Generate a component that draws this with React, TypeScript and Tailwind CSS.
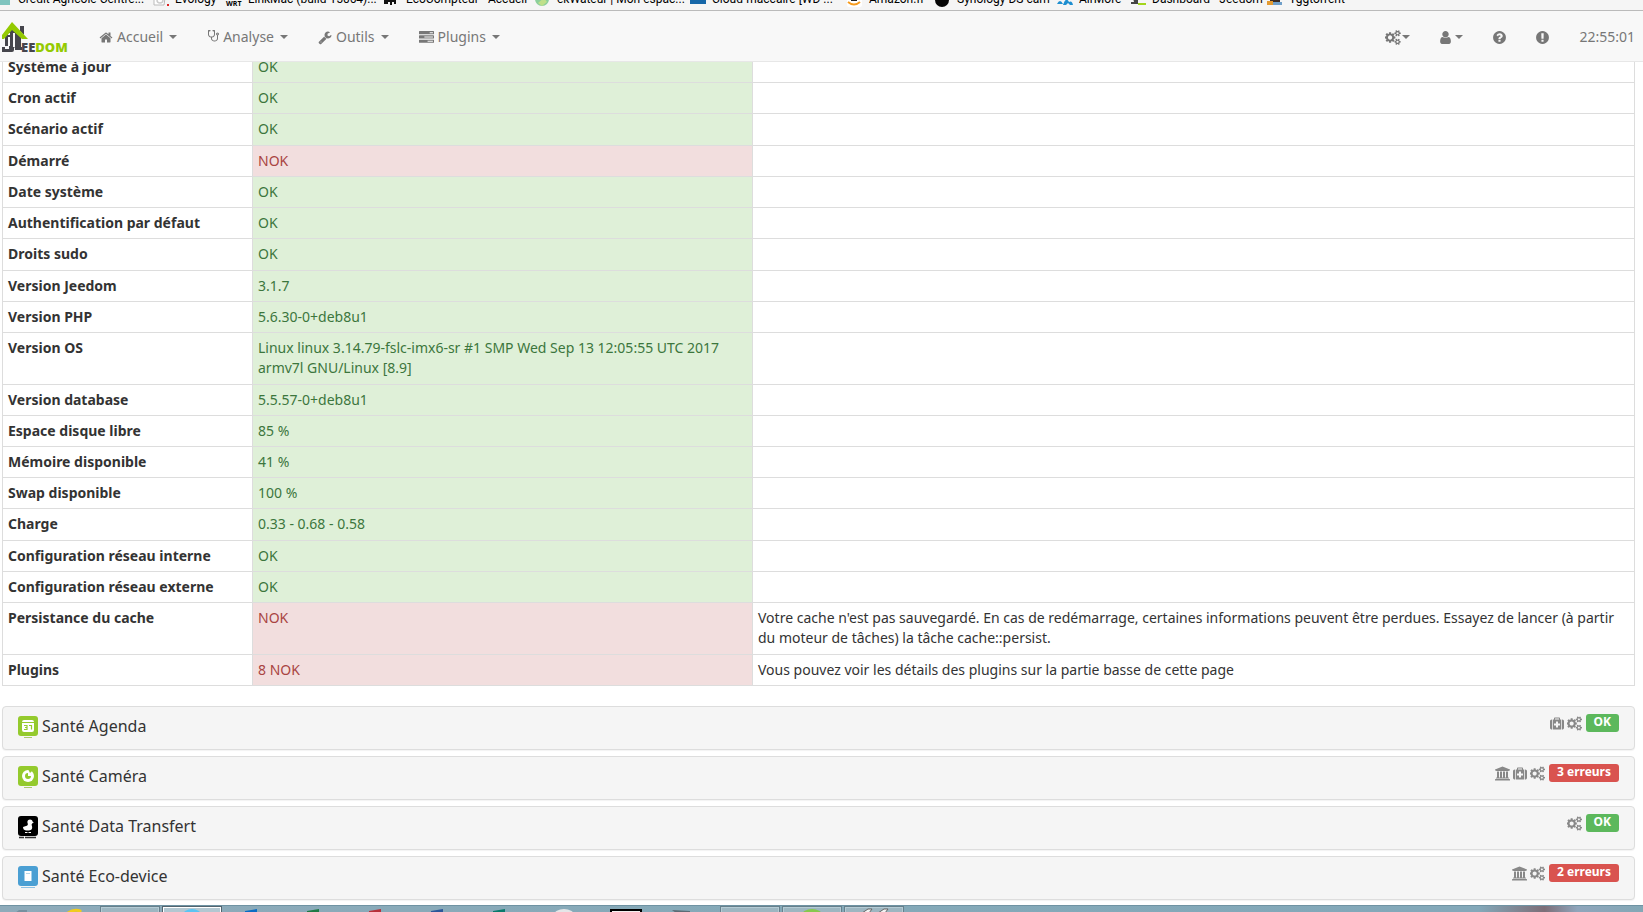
import type { ReactNode } from "react";
import clsx from "clsx";

type Status = "ok" | "nok";

type HealthRow = {
  name: string;
  value: string;
  status: Status;
  comment?: string;
};

const rows: HealthRow[] = [
  { name: "Système à jour", value: "OK", status: "ok" },
  { name: "Cron actif", value: "OK", status: "ok" },
  { name: "Scénario actif", value: "OK", status: "ok" },
  { name: "Démarré", value: "NOK", status: "nok" },
  { name: "Date système", value: "OK", status: "ok" },
  { name: "Authentification par défaut", value: "OK", status: "ok" },
  { name: "Droits sudo", value: "OK", status: "ok" },
  { name: "Version Jeedom", value: "3.1.7", status: "ok" },
  { name: "Version PHP", value: "5.6.30-0+deb8u1", status: "ok" },
  {
    name: "Version OS",
    value: "Linux linux 3.14.79-fslc-imx6-sr #1 SMP Wed Sep 13 12:05:55 UTC 2017 armv7l GNU/Linux [8.9]",
    status: "ok"
  },
  { name: "Version database", value: "5.5.57-0+deb8u1", status: "ok" },
  { name: "Espace disque libre", value: "85 %", status: "ok" },
  { name: "Mémoire disponible", value: "41 %", status: "ok" },
  { name: "Swap disponible", value: "100 %", status: "ok" },
  { name: "Charge", value: "0.33 - 0.68 - 0.58", status: "ok" },
  { name: "Configuration réseau interne", value: "OK", status: "ok" },
  { name: "Configuration réseau externe", value: "OK", status: "ok" },
  {
    name: "Persistance du cache",
    value: "NOK",
    status: "nok",
    comment:
      "Votre cache n'est pas sauvegardé. En cas de redémarrage, certaines informations peuvent être perdues. Essayez de lancer (à partir du moteur de tâches) la tâche cache::persist."
  },
  {
    name: "Plugins",
    value: "8 NOK",
    status: "nok",
    comment: "Vous pouvez voir les détails des plugins sur la partie basse de cette page"
  }
];

const glyphs = {
  home: {
    box: "0 0 1792 1792",
    d: "M1472 992v480q0 26-19 45t-45 19h-384v-384h-256v384h-384q-26 0-45-19t-19-45v-480q0-1 .5-3t.5-3l575-474 575 474q1 2 1 6zm223-69l-62 74q-8 9-21 11h-3q-13 0-21-7l-692-577-692 577q-12 8-24 7-13-2-21-11l-62-74q-8-10-7-23.5t11-21.5l719-599q32-26 76-26t76 26l244 204v-195q0-14 9-23t23-9h192q14 0 23 9t9 23v408l219 182q10 8 11 21.5t-7 23.5z"
  },
  stethoscope: {
    box: "0 0 1536 1792",
    d: "M1408 448q0 26-19 45t-45 19-45-19-19-45 19-45 45-19 45 19 19 45zm128 0q0 62-35.5 111t-92.5 70v395q0 159-131.5 271.5t-316.5 112.5-316.5-112.5-131.5-271.5v-132q-164-20-274-128t-110-252v-512q0-26 19-45t45-19q6 0 16 2 17-30 47-48t65-18q53 0 90.5 37.5t37.5 90.5-37.5 90.5-90.5 37.5q-33 0-64-18v402q0 106 94 181t226 75 226-75 94-181v-402q-31 18-64 18-53 0-90.5-37.5t-37.5-90.5 37.5-90.5 90.5-37.5q35 0 65 18t47 48q10-2 16-2 26 0 45 19t19 45v512q0 144-110 252t-274 128v132q0 106 94 181t226 75 226-75 94-181v-395q-57-21-92.5-70t-35.5-111q0-80 56-136t136-56 136 56 56 136z"
  },
  wrench: {
    box: "0 0 1792 1792",
    d: "M448 1472q0-26-19-45t-45-19-45 19-19 45 19 45 45 19 45-19 19-45zm644-420l-682 682q-37 37-90 37-52 0-91-37l-106-108q-38-36-38-90 0-53 38-91l681-681q39 98 114.5 173.5t173.5 114.5zm634-435q0 39-23 106-47 134-164.5 217.5t-258.5 83.5q-185 0-316.5-131.5t-131.5-316.5 131.5-316.5 316.5-131.5q58 0 121.5 16.5t107.5 46.5q16 11 16 28t-16 28l-293 169v224l193 107q5-3 79-48.5t135.5-81 70.5-35.5q15 0 23.5 10t8.5 25z"
  },
  tasks: {
    box: "0 0 1792 1792",
    d: "M1024 1408h640v-128h-640v128zm-384-512h1024v-128h-1024v128zm640-512h384v-128h-384v128zm512 832v256q0 26-19 45t-45 19h-1664q-26 0-45-19t-19-45v-256q0-26 19-45t45-19h1664q26 0 45 19t19 45zm0-512v256q0 26-19 45t-45 19h-1664q-26 0-45-19t-19-45v-256q0-26 19-45t45-19h1664q26 0 45 19t19 45zm0-512v256q0 26-19 45t-45 19h-1664q-26 0-45-19t-19-45v-256q0-26 19-45t45-19h1664q26 0 45 19t19 45z"
  },
  cogs: {
    box: "0 0 1856 1792",
    d: "M832 896q0-106-75-181t-181-75-181 75-75 181 75 181 181 75 181-75 75-181zm768 512q0-52-38-90t-90-38-90 38-38 90q0 53 37.5 90.5t90.5 37.5 90.5-37.5 37.5-90.5zm0-1024q0-52-38-90t-90-38-90 38-38 90q0 53 37.5 90.5t90.5 37.5 90.5-37.5 37.5-90.5zm-384 421v185q0 10-7 19.5t-16 10.5l-155 24q-11 35-32 76 34 48 90 115 7 11 7 20 0 12-7 19-23 30-82.5 89.5t-78.5 59.5q-11 0-21-7l-115-90q-37 19-77 31-11 108-23 155-7 24-30 24h-186q-11 0-20-7.5t-10-17.5l-23-153q-34-10-75-31l-118 89q-7 7-20 7-11 0-21-8-144-133-144-160 0-9 7-19 10-14 41-53t47-61q-23-44-35-82l-152-24q-10-1-17-9.5t-7-19.5v-185q0-10 7-19.5t16-10.5l155-24q11-35 32-76-34-48-90-115-7-11-7-20 0-12 7-20 22-30 82-89t79-59q11 0 21 7l115 90q34-18 77-32 11-108 23-154 7-24 30-24h186q11 0 20 7.5t10 17.5l23 153q34 10 75 31l118-89q8-7 20-7 11 0 21 8 144 133 144 160 0 8-7 19-12 16-42 54t-45 60q23 48 34 82l152 23q10 2 17 10.5t7 19.5zm640 533v140q0 16-149 31-12 27-30 52 51 113 51 138 0 4-4 7-122 71-124 71-8 0-46-47t-52-68q-20 2-30 2t-30-2q-14 21-52 68t-46 47q-2 0-124-71-4-3-4-7 0-25 51-138-18-25-30-52-149-15-149-31v-140q0-16 149-31 13-29 30-52-51-113-51-138 0-4 4-7 4-2 35-20t59-34 30-16q8 0 46 46.5t52 67.5q20-2 30-2t30 2q51-71 92-112l6-2q4 0 124 70 4 3 4 7 0 25-51 138 17 23 30 52 149 15 149 31zm0-1024v140q0 16-149 31-12 27-30 52 51 113 51 138 0 4-4 7-122 71-124 71-8 0-46-47t-52-68q-20 2-30 2t-30-2q-14 21-52 68t-46 47q-2 0-124-71-4-3-4-7 0-25 51-138-18-25-30-52-149-15-149-31v-140q0-16 149-31 13-29 30-52-51-113-51-138 0-4 4-7 4-2 35-20t59-34 30-16q8 0 46 46.5t52 67.5q20-2 30-2t30 2q51-71 92-112l6-2q4 0 124 70 4 3 4 7 0 25-51 138 17 23 30 52 149 15 149 31z"
  },
  user: {
    box: "256 0 1280 1792",
    d: "M1536 1399q0 109-62.5 187t-150.5 78h-854q-88 0-150.5-78t-62.5-187q0-85 8.5-160.5t31.5-152 58.5-131 94-89 134.5-34.5q131 128 313 128t313-128q76 0 134.5 34.5t94 89 58.5 131 31.5 152 8.5 160.5zm-256-887q0 159-112.5 271.5t-271.5 112.5-271.5-112.5-112.5-271.5 112.5-271.5 271.5-112.5 271.5 112.5 112.5 271.5z"
  },
  question: {
    box: "128 0 1536 1792",
    d: "M1024 1376v-192q0-14-9-23t-23-9h-192q-14 0-23 9t-9 23v192q0 14 9 23t23 9h192q14 0 23-9t9-23zm256-672q0-88-55.5-163t-138.5-116-170-41q-243 0-371 213-15 24 8 42l132 100q7 6 19 6 16 0 25-12 53-68 86-92 34-24 86-24 48 0 85.5 26t37.5 59q0 38-20 61t-68 45q-63 28-115.5 86.5t-52.5 125.5v36q0 14 9 23t23 9h192q14 0 23-9t9-23q0-19 21.5-49.5t54.5-49.5q32-18 49-28.5t46-35 44.5-48 28-60.5 12.5-81zm384 192q0 209-103 385.5t-279.5 279.5-385.5 103-385.5-103-279.5-279.5-103-385.5 103-385.5 279.5-279.5 385.5-103 385.5 103 279.5 279.5 103 385.5z"
  },
  exclamation: {
    box: "128 0 1536 1792",
    d: "M896 128q209 0 385.5 103t279.5 279.5 103 385.5-103 385.5-279.5 279.5-385.5 103-385.5-103-279.5-279.5-103-385.5 103-385.5 279.5-279.5 385.5-103zm128 1247v-190q0-14-9-23.5t-22-9.5h-192q-13 0-23 10t-10 23v190q0 13 10 23t23 10h192q13 0 22-9.5t9-23.5zm-2-344l18-621q0-12-10-18-10-8-24-8h-220q-14 0-24 8-10 6-10 18l17 621q0 10 10 17.5t24 7.5h185q14 0 23.5-7.5t10.5-17.5z"
  },
  medkit: {
    box: "0 0 1792 1792",
    d: "M1280 1120v-192q0-14-9-23t-23-9h-224v-224q0-14-9-23t-23-9h-192q-14 0-23 9t-9 23v224h-224q-14 0-23 9t-9 23v192q0 14 9 23t23 9h224v224q0 14 9 23t23 9h192q14 0 23-9t9-23v-224h224q14 0 23-9t9-23zm-640-736h512v-128h-512v128zM256 384v1280h-32q-92 0-158-66t-66-158v-832q0-92 66-158t158-66h32zM1440 384v1280h-1088v-1280h160v-160q0-40 28-68t68-28h576q40 0 68 28t28 68v160h160zM1792 608v832q0 92-66 158t-158 66h-32v-1280h32q92 0 158 66t66 158z"
  },
  university: {
    box: "0 0 1920 1792",
    d: "M960 0l960 384v128h-128q0 26-20.5 45t-48.5 19h-1526q-28 0-48.5-19t-20.5-45h-128v-128zm-704 640h256v768h128v-768h256v768h128v-768h256v768h128v-768h256v768h59q28 0 48.5 19t20.5 45v64h-1664v-64q0-26 20.5-45t48.5-19h59v-768zm1595 960q28 0 48.5 19t20.5 45v128h-1920v-128q0-26 20.5-45t48.5-19h1782z"
  }
};

type GlyphName = keyof typeof glyphs;

function Glyph({ name, className }: { name: GlyphName; className?: string }) {
  return (
    <svg
      viewBox={glyphs[name].box}
      fill="currentColor"
      fillRule="evenodd"
      aria-hidden="true"
      className={clsx("h-[15px] shrink-0", className)}
    >
      <path d={glyphs[name].d} />
    </svg>
  );
}

function Caret({ className }: { className?: string }) {
  return (
    <span
      className={clsx("h-0 w-0 border-x-4 border-t-4 border-x-transparent border-t-current", className)}
    />
  );
}

const bookmarks: { label: string; width: string; icon: ReactNode }[] = [
  {
    label: "Crédit Agricole Centre...",
    width: "w-[157px]",
    icon: <path d="M0 0h14v14H0z" fill="#7fc4bf" />
  },
  {
    label: "Evology",
    width: "w-[73px]",
    icon: (
      <>
        <path d="M1 0h12l-2 14H1z" fill="#fff" stroke="#bbb" />
        <circle cx="7" cy="9" r="3" fill="none" stroke="#ccc" strokeWidth="1.5" />
        <path d="M14 13h2v2h-2z" fill="#d22" />
      </>
    )
  },
  {
    label: "LinkMac (build 15064)...",
    width: "w-[158px]",
    icon: (
      <text x="0" y="15" fontSize="7" fontWeight="700" fontFamily="Open Sans, sans-serif">
        WRT
      </text>
    )
  },
  {
    label: "EcoCompteur - Accueil",
    width: "w-[151px]",
    icon: <path d="M0 6h12v7h-2v-2H8v3H6v-3H4v2H0z" fill="#111" />
  },
  {
    label: "ekWateur | Mon espac...",
    width: "w-[155px]",
    icon: (
      <>
        <circle cx="7" cy="8" r="7" fill="#8ccf9b" />
        <path d="M3 12l6-5 3 4-5 4z" fill="#bfe08a" />
      </>
    )
  },
  {
    label: "Cloud-maccaire [WD ...",
    width: "w-[157px]",
    icon: <path d="M0 3h16v10H0z" fill="#1667a8" />
  },
  {
    label: "Amazon.fr",
    width: "w-[88px]",
    icon: (
      <>
        <rect width="15" height="16" rx="2" fill="#fff" />
        <path d="M4 6h6v4H4z" fill="#222" />
        <path d="M1 11q6 5 12 0" fill="none" stroke="#f79b1c" strokeWidth="2" />
      </>
    )
  },
  {
    label: "Synology DS cam",
    width: "w-[122px]",
    icon: <circle cx="7" cy="9" r="7" fill="#050505" />
  },
  {
    label: "AirMore",
    width: "w-[73px]",
    icon: <path d="M0 13q3-6 6 0zm6 1q3-9 6-3 3-2 4 3h-3l-2-2-2 2z" fill="#1f8fd0" />
  },
  {
    label: "Dashboard - Jeedom",
    width: "w-[137px]",
    icon: (
      <>
        <path d="M2 3h6v10H1v-2h3z" fill="#444" />
        <path d="M8 12h8v2H8z" fill="#a3d51c" />
      </>
    )
  },
  {
    label: "Yggtorrent",
    width: "w-[90px]",
    icon: (
      <>
        <path d="M3 4h10v7H3z" fill="#3a2a22" />
        <path d="M0 10h6v4H0z" fill="#e39a31" />
        <path d="M6 11h9v3H6z" fill="#6f9fc9" />
      </>
    )
  }
];

function BookmarkBar() {
  return (
    <div className="flex h-[11px] items-end overflow-hidden border-b border-[#bbb] bg-[#f5f5f5] font-[Roboto,sans-serif] text-xs leading-4 text-black">
      {bookmarks.map((bookmark) => (
        <a
          key={bookmark.label}
          href="#"
          className={clsx(
            "mb-[3px] flex h-4 shrink-0 items-end gap-[6px] whitespace-nowrap first:-ml-1",
            bookmark.width
          )}
        >
          <svg viewBox="0 0 16 16" className="h-4 w-4 shrink-0 overflow-visible" aria-hidden="true">
            {bookmark.icon}
          </svg>
          {bookmark.label}
        </a>
      ))}
    </div>
  );
}

function Logo() {
  return (
    <svg viewBox="0 0 70 32" className="h-8 w-[70px]" role="img" aria-label="Jeedom">
      <path d="M18 5h4v9l-4-4z" fill="#46464c" />
      <path d="M10 7l9 9v10h1v3h-7v-3l-1 1v2q0 2-2 2H0v-5h3v2h4v-3H3V14z" fill="#46464c" />
      <path d="M6 12h2v2H6zm0 4h2v9H6zm5-4h2v14h-2z" fill="#f8f8f8" />
      <path d="M10 1L0 14v4h2l8-9 10 9h6z" fill="#94ca02" />
      <text x="19" y="31" fontSize="13" fontWeight="800" fontFamily="Open Sans, sans-serif" fill="#46464c">
        EE
        <tspan fill="#94ca02">DOM</tspan>
      </text>
    </svg>
  );
}

const menus: { label: string; icon: GlyphName; size: string }[] = [
  { label: "Accueil", icon: "home", size: "w-[14px]" },
  { label: "Analyse", icon: "stethoscope", size: "w-[12px]" },
  { label: "Outils", icon: "wrench", size: "w-[14px]" },
  { label: "Plugins", icon: "tasks", size: "w-[15px]" }
];

function Navbar() {
  return (
    <nav className="flex h-[51px] items-center justify-between border-b border-[#e7e7e7] bg-[#f8f8f8] pt-[2px] text-[#777]">
      <div className="flex items-center">
        <a href="#" className="mr-[12px] pl-[2px]">
          <Logo />
        </a>
        {menus.map((menu) => (
          <button key={menu.label} type="button" className="flex items-center px-[15px]">
            <Glyph name={menu.icon} className={menu.size} />
            <span className="ml-1">{menu.label}</span>
            <Caret className="ml-[6px]" />
          </button>
        ))}
      </div>
      <div className="flex items-center pr-2">
        <button type="button" aria-label="Configuration" className="flex items-center gap-[1px] px-[15px]">
          <Glyph name="cogs" className="w-4" />
          <Caret />
        </button>
        <button type="button" aria-label="Profil" className="flex items-center gap-1 px-[15px]">
          <Glyph name="user" className="w-[11px]" />
          <Caret />
        </button>
        <button type="button" aria-label="Aide" className="px-[15px]">
          <Glyph name="question" className="w-[13px]" />
        </button>
        <button type="button" aria-label="Signaler un problème" className="px-[15px]">
          <Glyph name="exclamation" className="w-[13px]" />
        </button>
        <time className="pl-[15px]">22:55:01</time>
      </div>
    </nav>
  );
}

function HealthTable() {
  return (
    <table className="-mt-[11px] w-full grow table-fixed border-collapse border border-[#ddd]">
      <colgroup>
        <col className="w-[250px]" />
        <col className="w-[500px]" />
        <col />
      </colgroup>
      <tbody>
        {rows.map((row) => (
          <tr key={row.name} className="align-top">
            <th scope="row" className="border border-[#ddd] p-[5px] text-left font-bold">
              {row.name}
            </th>
            <td
              className={clsx(
                "border border-[#ddd] p-[5px]",
                row.status === "ok" ? "bg-[#dff0d8] text-[#3c763d]" : "bg-[#f2dede] text-[#a94442]"
              )}
            >
              {row.value}
            </td>
            <td className="border border-[#ddd] p-[5px]">{row.comment}</td>
          </tr>
        ))}
      </tbody>
    </table>
  );
}

type Panel = {
  title: string;
  badge: string;
  status: Status;
  links: GlyphName[];
  icon: ReactNode;
};

const panels: Panel[] = [
  {
    title: "Santé Agenda",
    badge: "OK",
    status: "ok",
    links: ["medkit", "cogs"],
    icon: (
      <>
        <rect width="20" height="20" rx="3" fill="#94ca2d" />
        <path d="M4 7h12v7q0 2-2 2H6q-2 0-2-2zM4 6q0-2 2-2h8q2 0 2 2z" fill="#fff" />
        <path d="M6 9.500h3v4H6m1-2h2M11 9.500h2.500v4" fill="none" stroke="#94ca2d" strokeWidth="1.2" />
        <path d="M6 21.5h8" stroke="#a9c96c" />
      </>
    )
  },
  {
    title: "Santé Caméra",
    badge: "3 erreurs",
    status: "nok",
    links: ["university", "medkit", "cogs"],
    icon: (
      <>
        <rect width="20" height="20" rx="3" fill="#94ca2d" />
        <circle cx="10" cy="10" r="6" fill="#fff" />
        <path d="M10 10V7q-3 0-3 3t3 3 3-3z" fill="#94ca2d" />
        <path d="M10 3l2 4 3-3z" fill="#94ca2d" />
        <path d="M6 21.5h8" stroke="#a9c96c" />
      </>
    )
  },
  {
    title: "Santé Data Transfert",
    badge: "OK",
    status: "ok",
    links: ["cogs"],
    icon: (
      <>
        <rect width="20" height="20" rx="3" fill="#000" />
        <circle cx="12" cy="6" r="2.6" fill="#fff" />
        <path d="M13 5l3 1.500-3 1zM10 7h4q-1 2 0 3 1 4-3 4.500H8q-3-.5-3-3.500l3-1q2 0 2-3z" fill="#fff" />
        <path d="M7 16.500h2.500m1 0H13" stroke="#fff" />
        <path d="M1 21.5h5m1 0h11" stroke="#333" strokeWidth="1.5" />
      </>
    )
  },
  {
    title: "Santé Eco-device",
    badge: "2 erreurs",
    status: "nok",
    links: ["university", "cogs"],
    icon: (
      <>
        <rect width="20" height="20" rx="3" fill="#4a9fd3" />
        <rect x="6.500" y="5" width="7" height="10" fill="#fff" />
        <path d="M8 7.500h4" stroke="#b5d6ea" />
        <path d="M3 21.500h14" stroke="#8dc1e3" />
      </>
    )
  }
];

function HealthPanel({ panel }: { panel: Panel }) {
  return (
    <section className="flex h-11 items-start justify-between rounded border border-[#ddd] bg-[#f5f5f5] px-[15px] shadow-[0_1px_1px_rgba(0,0,0,0.05)]">
      <h3 className="pt-[7px]">
        <button type="button" className="flex items-center gap-1 text-base leading-6">
          <svg viewBox="0 0 20 20" className="h-5 w-5 overflow-visible" aria-hidden="true">
            {panel.icon}
          </svg>
          {panel.title}
        </button>
      </h3>
      <div className="flex items-center gap-[3px] pt-[7px] text-[#888]">
        {panel.links.map((link) => (
          <a key={link} href="#" aria-label={link}>
            <Glyph name={link} className={link === "medkit" ? "w-[14px]" : "w-[15px]"} />
          </a>
        ))}
        <span
          className={clsx(
            "ml-[1px] h-[18px] rounded-[3px] px-2 text-xs leading-4 font-bold text-white",
            panel.status === "ok" ? "bg-[#5cb85c]" : "bg-[#d9534f]"
          )}
        >
          {panel.badge}
        </span>
      </div>
    </section>
  );
}

const tasks: { name: string; frame?: "open" | "active"; art?: ReactNode }[] = [
  { name: "Dossiers", frame: "open" },
  { name: "Navigateur", frame: "active", art: <ellipse cx="30" cy="9" rx="9" ry="6" fill="#5cc4f2" /> },
  { name: "Outlook", art: <path d="M21 7V5l12-2v4z" fill="#0a6cc4" /> },
  { name: "Excel", art: <path d="M21 7V5l12-2v4z" fill="#1f7a45" /> },
  { name: "Access", art: <path d="M21 7V5l12-2v4z" fill="#b7303a" /> },
  { name: "Word", art: <path d="M21 7V5l12-2v4z" fill="#2b579a" /> },
  { name: "Publisher", art: <path d="M21 7V5l12-2v4z" fill="#0a7a6c" /> },
  { name: "Disque", art: <ellipse cx="30" cy="9" rx="10" ry="6" fill="#e4e6e8" /> },
  { name: "Terminal", art: <path d="M15 9V4h30v5z" fill="#f5efef" stroke="#000" strokeWidth="2" /> },
  { name: "Outils", art: <path d="M14 4l18 1v2H18z" fill="#5c6c76" /> },
  { name: "Documents", frame: "open" },
  { name: "Messagerie", frame: "open", art: <ellipse cx="30" cy="9" rx="10" ry="6" fill="#86c84e" /> },
  {
    name: "Notes",
    frame: "open",
    art: <path d="M18 7l6-4h4l-3 4zm16 0l6-4h4l-3 4z" fill="#f2f2f2" stroke="#666" strokeWidth="1" />
  }
];

function Taskbar() {
  return (
    <footer className="flex h-[7px] items-start overflow-hidden border-t border-[#6f93a3] bg-[linear-gradient(90deg,#8eabba_0%,#84a9b8_50%,#83a8b9_90%,#7d6e78_94%,#8fa5bb_96%,#83a8b6_100%)]">
      <button type="button" aria-label="Démarrer" className="w-[50px]">
        <svg viewBox="0 0 50 7" className="block h-[7px] w-[50px]" aria-hidden="true">
          <path d="M15 7l4-3h8v3z" fill="#75909f" />
        </svg>
      </button>
      <button type="button" aria-label="Internet Explorer" className="w-[50px]">
        <svg viewBox="0 0 50 7" className="block h-[7px] w-[50px]" aria-hidden="true">
          <path d="M18 7q6-4 12-2v3" fill="none" stroke="#f2cc1c" strokeWidth="3" />
        </svg>
      </button>
      {tasks.map((task) => (
        <button
          key={task.name}
          type="button"
          aria-label={task.name}
          className={clsx(
            "mr-[2px] flex h-3 w-[60px] items-start",
            task.frame === "open" && "bg-[#9db6c1] shadow-[inset_0_0_0_1px_#66808c,inset_0_0_0_2px_#b5cbd4]",
            task.frame === "active" && "bg-[#b3c7d1] shadow-[inset_0_0_0_1px_#52646e,inset_0_0_0_2px_#fff]"
          )}
        >
          <svg viewBox="0 0 60 7" className="block h-[7px] w-[60px]" aria-hidden="true">
            {task.art}
          </svg>
        </button>
      ))}
    </footer>
  );
}

export default function App() {
  return (
    <div className="flex h-screen flex-col overflow-hidden bg-white font-['Noto_Sans',sans-serif] text-[14px] leading-5 text-[#333]">
      <BookmarkBar />
      <Navbar />
      <main className="flex min-h-0 flex-1 flex-col overflow-hidden pr-2 pb-[5px] pl-[2px]">
        <HealthTable />
        <div className="mt-5 flex flex-col gap-[6px]">
          {panels.map((panel) => (
            <HealthPanel key={panel.title} panel={panel} />
          ))}
        </div>
      </main>
      <Taskbar />
    </div>
  );
}
